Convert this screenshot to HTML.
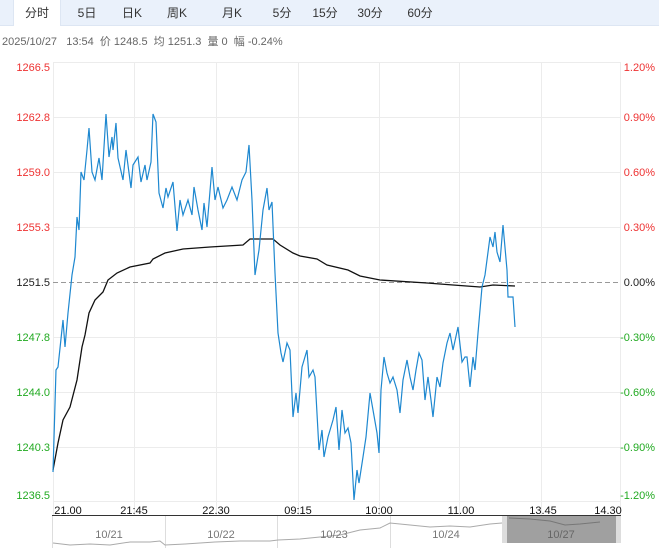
<!DOCTYPE html>
<html><head><meta charset="utf-8"><style>
*{margin:0;padding:0;box-sizing:border-box}
body{width:659px;height:548px;background:#fff;position:relative;overflow:hidden;font-family:"Liberation Sans","Noto Sans CJK SC",sans-serif}
.tabs{position:absolute;left:0;top:0;width:659px;height:26px;background:#eaf1fb;border-bottom:1px solid #dde6f3}
.tab{position:absolute;top:0;height:26px;line-height:26px;font-size:12px;color:#333;text-align:center}
.sel{background:#fff;border-right:1px solid #dde6f3;border-left:1px solid #dde6f3}
.info{position:absolute;left:2px;top:33px;font-size:11px;color:#666;white-space:pre}
</style></head><body>
<div class="tabs">
<div class="tab sel" style="left:13px;width:48px">分时</div>
<div class="tab" style="left:72px;width:30px">5日</div>
<div class="tab" style="left:117px;width:30px">日K</div>
<div class="tab" style="left:162px;width:30px">周K</div>
<div class="tab" style="left:217px;width:30px">月K</div>
<div class="tab" style="left:267px;width:30px">5分</div>
<div class="tab" style="left:310px;width:30px">15分</div>
<div class="tab" style="left:355px;width:30px">30分</div>
<div class="tab" style="left:405px;width:30px">60分</div>
</div>
<div class="info">2025/10/27   13:54  价 1248.5  均 1251.3  量 0  幅 -0.24%</div>
<svg width="659" height="548" style="position:absolute;left:0;top:0" font-family="Liberation Sans, sans-serif" font-size="11">
<g stroke="#ececec" stroke-width="1">
<line x1="53" y1="62.5" x2="620" y2="62.5"/><line x1="53" y1="117.5" x2="620" y2="117.5"/><line x1="53" y1="172.5" x2="620" y2="172.5"/><line x1="53" y1="227.5" x2="620" y2="227.5"/><line x1="53" y1="337.5" x2="620" y2="337.5"/><line x1="53" y1="392.5" x2="620" y2="392.5"/><line x1="53" y1="447.5" x2="620" y2="447.5"/><line x1="53" y1="501.5" x2="620" y2="501.5"/>
<line x1="53.5" y1="62" x2="53.5" y2="515"/><line x1="134.5" y1="62" x2="134.5" y2="515"/><line x1="216.5" y1="62" x2="216.5" y2="515"/><line x1="298.5" y1="62" x2="298.5" y2="515"/><line x1="379.5" y1="62" x2="379.5" y2="515"/><line x1="459.5" y1="62" x2="459.5" y2="515"/><line x1="541.5" y1="62" x2="541.5" y2="515"/><line x1="620.5" y1="62" x2="620.5" y2="515"/>
</g>
<line x1="53" y1="282.5" x2="620" y2="282.5" stroke="#999" stroke-dasharray="5,3"/>
<g text-anchor="end">
<text x="50" y="71" fill="#e33">1266.5</text><text x="50" y="121" fill="#e33">1262.8</text><text x="50" y="176" fill="#e33">1259.0</text><text x="50" y="231" fill="#e33">1255.3</text><text x="50" y="286" fill="#222">1251.5</text><text x="50" y="341" fill="#2a2">1247.8</text><text x="50" y="396" fill="#2a2">1244.0</text><text x="50" y="451" fill="#2a2">1240.3</text><text x="50" y="499" fill="#2a2">1236.5</text>
<text x="655" y="71" fill="#e33">1.20%</text><text x="655" y="121" fill="#e33">0.90%</text><text x="655" y="176" fill="#e33">0.60%</text><text x="655" y="231" fill="#e33">0.30%</text><text x="655" y="286" fill="#222">0.00%</text><text x="655" y="341" fill="#2a2">-0.30%</text><text x="655" y="396" fill="#2a2">-0.60%</text><text x="655" y="451" fill="#2a2">-0.90%</text><text x="655" y="499" fill="#2a2">-1.20%</text>
</g>
<polyline fill="none" stroke="#111" stroke-width="1.3" points="53,470 58,443 63,420 70,407 77,380 82,347 85,335 89,313 95,300 103,292 108,280 117,273 130,267 150,263 153,259 165,253 183,249 210,247 243,245 250,239 273,239 280,245 293,253 300,256 317,259 327,265 348,270 360,276 380,280 427,283 453,285 480,287 493,285 515,286"/>
<polyline fill="none" stroke="#1e88d0" stroke-width="1.2" points="53,472 56,370 58,367 63,320 65,347 68,313 72,275 75,257 77,217 79,230 81,172 84,180 87,150 89,128 92,172 95,180 99,158 102,180 106,114 109,157 112,137 113,150 116,123 118,158 123,180 126,150 131,188 133,165 138,157 141,182 145,165 147,180 151,162 153,114 156,122 159,193 163,208 166,188 168,197 173,182 177,231 180,200 183,215 188,200 192,215 194,187 198,210 202,230 204,203 207,227 212,167 215,200 218,187 223,208 227,200 232,187 237,200 242,180 246,172 249,145 252,200 255,275 259,250 263,210 267,188 269,210 272,202 275,273 278,333 281,353 283,362 287,343 290,350 293,417 296,393 298,413 302,367 307,350 309,377 313,370 315,377 319,450 322,430 324,457 328,437 333,420 336,407 339,450 342,410 345,433 348,428 351,443 354,500 357,470 359,483 363,457 366,437 370,393 373,410 377,433 379,453 381,390 384,357 387,373 390,383 393,377 397,390 400,413 403,380 407,360 410,377 413,390 416,370 419,353 422,360 425,400 428,377 431,400 433,417 437,377 440,387 443,363 447,343 450,333 453,350 458,327 462,362 465,357 467,357 470,387 473,357 475,370 478,333 482,287 485,275 490,237 493,247 495,232 497,252 500,262 503,225 507,270 508,297 513,297 515,327"/>
<g fill="#111" text-anchor="middle">
<text x="68" y="514">21.00</text><text x="134" y="514">21:45</text><text x="216" y="514">22.30</text><text x="298" y="514">09:15</text><text x="379" y="514">10:00</text><text x="461" y="514">11.00</text><text x="543" y="514">13.45</text><text x="608" y="514">14.30</text>
</g>
<line x1="52" y1="515.5" x2="621" y2="515.5" stroke="#333"/>
<g stroke="#ddd"><line x1="165.5" y1="516" x2="165.5" y2="548"/><line x1="277.5" y1="516" x2="277.5" y2="548"/><line x1="390.5" y1="516" x2="390.5" y2="548"/><line x1="52.5" y1="516" x2="52.5" y2="548"/></g>
<rect x="505" y="516" width="113" height="27" fill="#a0a0a0"/>
<rect x="502" y="516" width="5" height="27" fill="#ddd"/><rect x="616" y="516" width="5" height="27" fill="#ddd"/>
<polyline fill="none" stroke="#aaa" points="53,543 70,545 90,544 110,545 130,542 150,542 160,541 165,545 185,544 200,543 215,542 240,541 270,541 278,540 300,539 320,537 340,535 360,530 380,528 390,523 410,525 430,527 450,526 470,527 490,524 502,523"/>
<polyline fill="none" stroke="#777" points="509,518 530,519 550,521 565,525 580,524 600,522"/>
<g fill="#777" text-anchor="middle"><text x="109" y="538">10/21</text><text x="221" y="538">10/22</text><text x="334" y="538">10/23</text><text x="446" y="538">10/24</text><text x="561" y="538" fill="#666">10/27</text></g>
</svg>
</body></html>
